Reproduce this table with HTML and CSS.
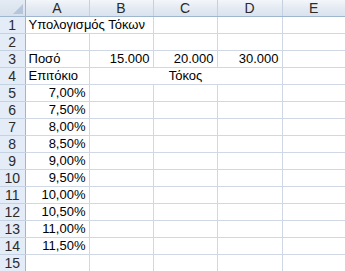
FILE: index.html
```html
<!DOCTYPE html>
<html>
<head>
    <title>Υπολογισμός Τόκων</title>
    <link rel="stylesheet" href="styles.css">
</head>
<body>
    <table class="sheet">
        <colgroup>
            <col class="c-rows">
            <col class="c-std">
            <col class="c-std">
            <col class="c-std">
            <col class="c-wide">
            <col class="c-end">
        </colgroup>
        <tr class="col-head">
            <th class="corner"><span class="corner-mark"></span></th>
            <th>A</th>
            <th>B</th>
            <th>C</th>
            <th>D</th>
            <th class="last">E</th>
        </tr>
        <!-- title runs over into B1, so no gridline between them -->
        <tr><th>1</th><td colspan="2" class="txt">Υπολογισμός Τόκων</td><td></td><td></td><td></td></tr>
        <tr><th>2</th><td></td><td></td><td></td><td></td><td></td></tr>
        <tr><th>3</th><td class="txt">Ποσό</td><td class="num">15.000</td><td class="num">20.000</td><td class="num">30.000</td><td></td></tr>
        <tr><th>4</th><td class="txt">Επιτόκιο</td><td colspan="3" class="mid">Τόκος</td><td></td></tr>
        <tr><th>5</th><td class="num">7,00%</td><td></td><td></td><td></td><td></td></tr>
        <tr><th>6</th><td class="num">7,50%</td><td></td><td></td><td></td><td></td></tr>
        <tr><th>7</th><td class="num">8,00%</td><td></td><td></td><td></td><td></td></tr>
        <tr><th>8</th><td class="num">8,50%</td><td></td><td></td><td></td><td></td></tr>
        <tr><th>9</th><td class="num">9,00%</td><td></td><td></td><td></td><td></td></tr>
        <tr><th>10</th><td class="num">9,50%</td><td></td><td></td><td></td><td></td></tr>
        <tr><th>11</th><td class="num">10,00%</td><td></td><td></td><td></td><td></td></tr>
        <tr><th>12</th><td class="num">10,50%</td><td></td><td></td><td></td><td></td></tr>
        <tr><th>13</th><td class="num">11,00%</td><td></td><td></td><td></td><td></td></tr>
        <tr><th>14</th><td class="num">11,50%</td><td></td><td></td><td></td><td></td></tr>
        <tr><th>15</th><td></td><td></td><td></td><td></td><td></td></tr>
    </table>
</body>
</html>
```

FILE: styles.css
```css
body {
    margin: 0;
    background: #fff;
    overflow: hidden;
    font-family: "Liberation Sans", Arial, sans-serif;
    font-size: 13px;
}
.sheet {
    border-collapse: collapse;
    table-layout: fixed;
    width: 345px;
}
.c-rows { width: 25px; }
.c-std { width: 64px; }
.c-wide { width: 65px; }
.c-end { width: 63px; }

.sheet th,
.sheet td {
    height: 16px;
    padding: 0 3px 0 3px;
    line-height: 16px;
    white-space: nowrap;
    overflow: visible;
}
.sheet td {
    border-right: 1px solid #d0d7e5;
    border-bottom: 1px solid #d0d7e5;
    color: #000;
}
/* row numbers */
.sheet th {
    padding: 0;
    font-weight: normal;
    font-size: 14px;
    color: #2b2b2b;
    text-align: center;
    background: #e4ecf7;
    border-right: 1px solid #9eb6ce;
    border-bottom: 1px solid #c5d2e2;
}
/* column letters */
.sheet .col-head th {
    background: linear-gradient(#f3f6fa, #e3e9f2 55%, #d9e2ee);
    border-right: 1px solid #c5d1e0;
    border-bottom: 1px solid #9eb6ce;
}
.sheet .col-head th.last {
    border-right: none;
}
.sheet .col-head th.corner {
    position: relative;
    border-right: 1px solid #9eb6ce;
    background: linear-gradient(#e4ebf4, #d7e0ec);
}
.corner-mark {
    position: absolute;
    right: 2px;
    bottom: 2px;
    width: 0;
    height: 0;
    border-left: 10px solid transparent;
    border-bottom: 10px solid #b6c6da;
}
.txt {
    text-align: left;
}
.num {
    text-align: right;
}
.mid {
    text-align: center;
}
```
